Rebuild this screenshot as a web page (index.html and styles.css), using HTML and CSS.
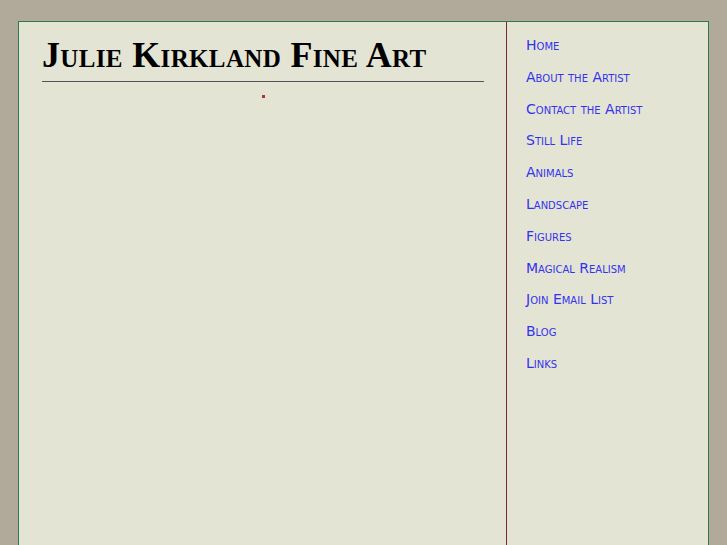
FILE: index.html
```html
<!DOCTYPE html>
<html>
<head>
<meta charset="utf-8">
<title>Julie Kirkland Fine Art</title>
<link rel="stylesheet" href="styles.css">
</head>
<body>
<div class="page">
  <div class="main">
    <h1 class="title">Julie Kirkland Fine Art</h1>
    <div class="dot-row"><span class="dot"></span></div>
  </div>
  <nav class="side">
    <ul class="menu">
      <li><a href="#">Home</a></li>
      <li><a href="#">About the Artist</a></li>
      <li><a href="#">Contact the Artist</a></li>
      <li><a href="#">Still Life</a></li>
      <li><a href="#">Animals</a></li>
      <li><a href="#">Landscape</a></li>
      <li><a href="#">Figures</a></li>
      <li><a href="#">Magical Realism</a></li>
      <li><a href="#">Join Email List</a></li>
      <li><a href="#">Blog</a></li>
      <li><a href="#">Links</a></li>
    </ul>
  </nav>
</div>
</body>
</html>
```

FILE: styles.css
```css
html, body {
  margin: 0;
  padding: 0;
  background: #b1aa9a;
  height: 100%;
  overflow: hidden;
}
.page {
  margin: 21px 0 0 18px;
  width: 689px;
  height: 523px;
  background: #e4e4d4;
  border: 1px solid #2f7a4c;
  border-bottom: none;
  display: flex;
}
.main {
  width: 488px;
  padding: 15px 22px 0 23px;
  box-sizing: border-box;
  border-right: 1px solid #7a2a2a;
}
.title {
  margin: 0;
  font-family: "Liberation Serif", serif;
  font-weight: bold;
  font-size: 36px;
  letter-spacing: 0.35px;
  line-height: 36px;
  font-variant: small-caps;
  color: #000;
  padding-bottom: 8px;
  border-bottom: 1px solid #555;
}
.dot-row {
  display: flex;
  justify-content: center;
  margin-top: 13px;
}
.dot {
  display: block;
  width: 3px;
  height: 3px;
  background: #b03434;
}
.side {
  flex: 1;
  padding: 8px 0 0 19px;
}
.menu {
  list-style: none;
  margin: 0;
  padding: 0;
}
.menu li {
  line-height: 31.8px;
  font-family: "DejaVu Sans", sans-serif;
  font-size: 14px;
  font-variant: small-caps;
}
.menu a {
  color: #3333ee;
  text-decoration: none;
}
```
